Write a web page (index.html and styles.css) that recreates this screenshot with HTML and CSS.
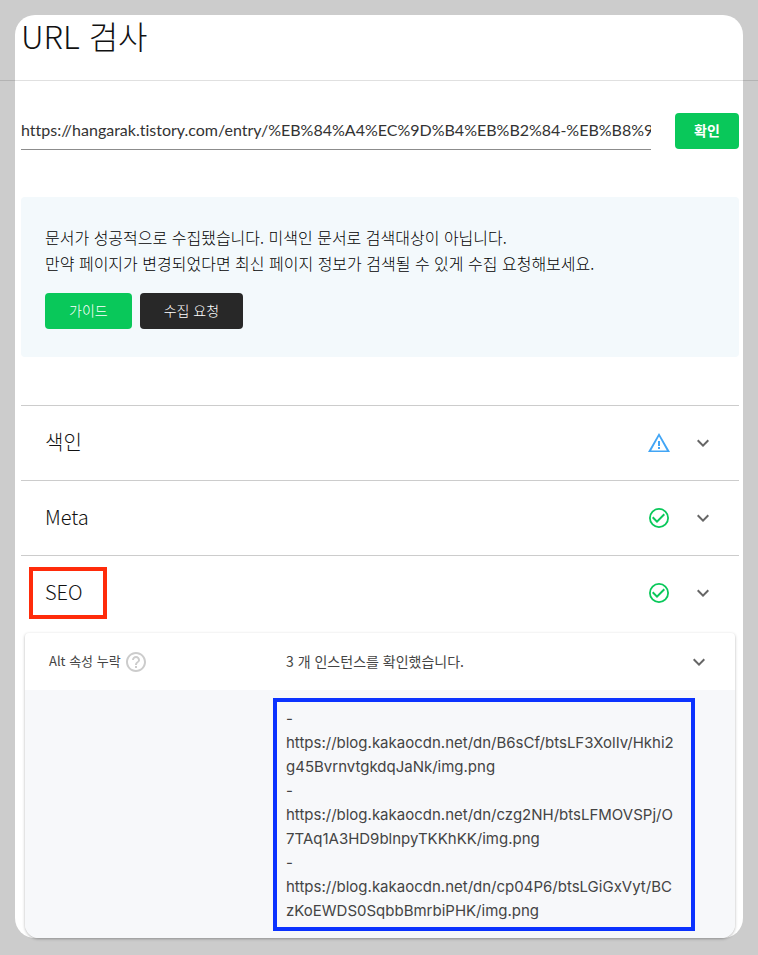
FILE: index.html
```html
<!DOCTYPE html>
<html lang="ko">
<head>
<meta charset="utf-8">
<meta name="viewport" content="width=device-width, initial-scale=1">
<title>URL 검사</title>
<link rel="stylesheet" href="styles.css">
</head>
<body>
<svg class="defs" aria-hidden="true">
  <symbol id="chevron" viewBox="0 0 24 24"><path d="M7.4 8.6 12 13.2l4.6-4.6L18 10l-6 6-6-6z"/></symbol>
  <symbol id="check" viewBox="0 0 24 24"><path d="M16.6 7.6 10 14.2l-3.600-3.600L5 12l5 5 8-8zM12 2a10 10 0 1 0 0 20 10 10 0 0 0 0-20zm0 18.200a8.200 8.200 0 1 1 0-16.400 8.200 8.200 0 0 1 0 16.400z"/></symbol>
  <symbol id="warning" viewBox="0 0 24 24"><path fill-rule="evenodd" d="M12 2 1 21h22zM12 5.500 4.200 19.400h15.600zM11 10h2v5h-2zM11 16h2v2h-2z"/></symbol>
  <symbol id="help" viewBox="0 0 24 24"><path d="M11 18h2v-2h-2v2zm1-16C6.480 2 2 6.480 2 12s4.480 10 10 10 10-4.480 10-10S17.520 2 12 2zm0 18c-4.410 0-8-3.590-8-8s3.590-8 8-8 8 3.590 8 8-3.590 8-8 8zm0-14c-2.210 0-4 1.790-4 4h2c0-1.100.9-2 2-2s2 .9 2 2c0 2-3 1.750-3 5h2c0-2.250 3-2.500 3-5 0-2.210-1.790-4-4-4z"/></symbol>
</svg>
<main class="panel">
  <header class="header"><h1 class="title">URL 검사</h1></header>
  <form class="search">
    <input class="search-input" type="text" aria-label="URL" value="https://hangarak.tistory.com/entry/%EB%84%A4%EC%9D%B4%EB%B2%84-%EB%B8%94%EB%A1%9C%EA%B7%B8">
    <button class="button button-strong" type="button">확인</button>
  </form>
  <section class="notice">
    <p class="notice-text">문서가 성공적으로 수집됐습니다. 미색인 문서로 검색대상이 아닙니다.<br>만약 페이지가 변경되었다면 최신 페이지 정보가 검색될 수 있게 수집 요청해보세요.</p>
    <div class="actions">
      <button class="button" type="button">가이드</button>
      <button class="button button-dark" type="button">수집 요청</button>
    </div>
  </section>
  <section class="results">
    <button class="row" type="button"><span class="row-label">색인</span><svg class="icon warning"><use href="#warning"/></svg><svg class="icon"><use href="#chevron"/></svg></button>
    <button class="row" type="button"><span class="row-label">Meta</span><svg class="icon success"><use href="#check"/></svg><svg class="icon"><use href="#chevron"/></svg></button>
    <button class="row" type="button"><span class="row-label marked">SEO</span><svg class="icon success"><use href="#check"/></svg><svg class="icon"><use href="#chevron"/></svg></button>
    <div class="card">
      <button class="card-head" type="button">
        <span class="card-name"><span class="card-text">Alt 속성 누락</span><svg class="icon help"><use href="#help"/></svg></span>
        <span class="card-summary card-text">3 개 인스턴스를 확인했습니다.</span>
        <svg class="icon"><use href="#chevron"/></svg>
      </button>
      <div class="card-body">
        <ul class="links">
          <li>-<a class="link" href="https://blog.kakaocdn.net/dn/B6sCf/btsLF3XolIv/Hkhi2g45BvrnvtgkdqJaNk/img.png">https://blog.kakaocdn.net/dn/B6sCf/btsLF3XolIv/Hkhi2g45BvrnvtgkdqJaNk/img.png</a></li>
          <li>-<a class="link" href="https://blog.kakaocdn.net/dn/czg2NH/btsLFMOVSPj/O7TAq1A3HD9blnpyTKKhKK/img.png">https://blog.kakaocdn.net/dn/czg2NH/btsLFMOVSPj/O7TAq1A3HD9blnpyTKKhKK/img.png</a></li>
          <li>-<a class="link" href="https://blog.kakaocdn.net/dn/cp04P6/btsLGiGxVyt/BCzKoEWDS0SqbbBmrbiPHK/img.png">https://blog.kakaocdn.net/dn/cp04P6/btsLGiGxVyt/BCzKoEWDS0SqbbBmrbiPHK/img.png</a></li>
        </ul>
      </div>
    </div>
  </section>
</main>
</body>
</html>
```
FILE: styles.css
```css
* { box-sizing: border-box; }
body {
  margin: 0;
  padding: 15px 15px 17px;
  background: #ccc;
  color: #111;
  font-family: "Noto Sans CJK KR", sans-serif;
  font-weight: 300;
}
h1, p, ul { margin: 0; padding: 0; }
button, input { font: inherit; color: inherit; border: 0; background: none; }
button { padding: 0; cursor: pointer; }
.defs { display: none; }
.icon { width: 24px; height: 24px; flex: none; fill: #666; }
.panel { background: #fff; border-radius: 20px; }
.header { position: relative; height: 66px; padding: 0 6px; }
.header::after {
  content: "";
  position: absolute;
  left: -15px;
  right: -15px;
  bottom: 0;
  border-bottom: 1px solid rgba(0, 0, 0, 0.12);
}
.title { font-size: 32px; line-height: 40px; font-weight: 300; }
.search {
  display: flex;
  align-items: flex-start;
  gap: 24px;
  padding: 32px 4px 0 6px;
}
.search-input {
  flex: 1;
  min-width: 0;
  height: 37px;
  padding: 0 0 4px;
  color: #333;
  font-family: Lato, sans-serif;
  font-size: 16px;
  font-weight: 400;
  font-variant-ligatures: none;
  border-bottom: 1px solid #8c8c8c;
  outline: 0;
}
.button {
  height: 36px;
  padding: 0 24px 2px;
  border-radius: 4px;
  background: #09c85a;
  color: #fff;
  font-size: 14px;
}
.button-strong { width: 64px; padding: 0 0 2px; font-weight: 700; }
.button-dark { background: #282828; }
.notice {
  margin: 47px 4px 0 6px;
  padding: 27px 24px 28px;
  border-radius: 4px;
  background: #f3f9fc;
}
.notice-text { color: #000; font-size: 16px; line-height: 26px; }
.actions { display: flex; gap: 8px; margin-top: 17px; }
.results { padding: 48px 4px 0 6px; }
.row {
  display: flex;
  align-items: center;
  gap: 20px;
  width: 100%;
  height: 75px;
  padding: 0 24px;
  border-top: 1px solid #ccc;
  text-align: left;
}
.row-label { margin-right: auto; padding-bottom: 2px; font-size: 20px; line-height: 30px; }
.marked { position: relative; }
.marked::after {
  content: "";
  position: absolute;
  inset: -10px -24px -10px -16px;
  border: 4px solid #ff2b0a;
}
.warning { fill: #42a5f5; }
.success { fill: #09c85a; }
.card {
  margin: 3px 4px 0;
  border-radius: 4px 4px 14px 14px;
  box-shadow: 0 1px 3px rgba(0, 0, 0, 0.3);
  overflow: hidden;
}
.card-head {
  display: grid;
  grid-template-columns: 237px 1fr 24px;
  align-items: center;
  width: 100%;
  height: 57px;
  padding: 0 24px;
  color: #444;
  font-weight: 400;
  text-align: left;
}
.card-name { display: flex; align-items: center; gap: 3px; font-size: 13px; }
.card-text { padding-bottom: 2px; }
.help { fill: #ccc; }
.card-summary { font-size: 14px; }
.card-body {
  padding: 8px 40px 7px 248px;
  background: #f7f8fa;
}
.links {
  padding: 5px 12px 4px 9px;
  border: 4px solid #0b32ff;
  font-family: Inter, sans-serif;
  font-size: 15px;
  line-height: 24px;
  font-weight: 400;
  color: #444;
  list-style: none;
}
.link { display: block; color: inherit; text-decoration: none; word-break: break-all; }
```
